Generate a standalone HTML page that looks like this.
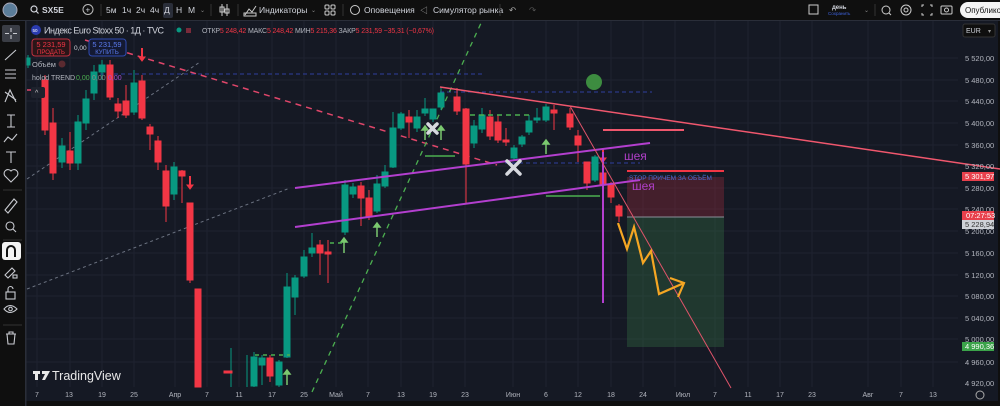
<!DOCTYPE html>
<html><head><meta charset="utf-8">
<style>
html,body{margin:0;padding:0;background:#0f0f0f;width:1000px;height:406px;overflow:hidden}
svg{display:block;font-family:"Liberation Sans","Noto Sans CJK SC",sans-serif}
</style></head><body>
<svg width="1000" height="406" viewBox="0 0 1000 406" xmlns="http://www.w3.org/2000/svg">
<rect x="0" y="0" width="1000" height="406" fill="#0f0f0f"/>
<rect x="26" y="21" width="972" height="380" fill="#151924"/>
<g stroke="#1e2230" stroke-width="1">
<line x1="26" y1="58" x2="958" y2="58"/><line x1="26" y1="80" x2="958" y2="80"/><line x1="26" y1="101" x2="958" y2="101"/><line x1="26" y1="123" x2="958" y2="123"/><line x1="26" y1="145" x2="958" y2="145"/><line x1="26" y1="166" x2="958" y2="166"/><line x1="26" y1="188" x2="958" y2="188"/><line x1="26" y1="209" x2="958" y2="209"/><line x1="26" y1="231" x2="958" y2="231"/><line x1="26" y1="253" x2="958" y2="253"/><line x1="26" y1="275" x2="958" y2="275"/><line x1="26" y1="296" x2="958" y2="296"/><line x1="26" y1="318" x2="958" y2="318"/><line x1="26" y1="339" x2="958" y2="339"/><line x1="26" y1="362" x2="958" y2="362"/>
<line x1="37" y1="21" x2="37" y2="387"/><line x1="70" y1="21" x2="70" y2="387"/><line x1="102" y1="21" x2="102" y2="387"/><line x1="134" y1="21" x2="134" y2="387"/><line x1="175" y1="21" x2="175" y2="387"/><line x1="207" y1="21" x2="207" y2="387"/><line x1="239" y1="21" x2="239" y2="387"/><line x1="272" y1="21" x2="272" y2="387"/><line x1="304" y1="21" x2="304" y2="387"/><line x1="336" y1="21" x2="336" y2="387"/><line x1="368" y1="21" x2="368" y2="387"/><line x1="401" y1="21" x2="401" y2="387"/><line x1="433" y1="21" x2="433" y2="387"/><line x1="465" y1="21" x2="465" y2="387"/><line x1="513" y1="21" x2="513" y2="387"/><line x1="546" y1="21" x2="546" y2="387"/><line x1="578" y1="21" x2="578" y2="387"/><line x1="611" y1="21" x2="611" y2="387"/><line x1="643" y1="21" x2="643" y2="387"/><line x1="675" y1="21" x2="675" y2="387"/><line x1="715" y1="21" x2="715" y2="387"/><line x1="748" y1="21" x2="748" y2="387"/><line x1="780" y1="21" x2="780" y2="387"/><line x1="812" y1="21" x2="812" y2="387"/><line x1="868" y1="21" x2="868" y2="387"/><line x1="901" y1="21" x2="901" y2="387"/><line x1="933" y1="21" x2="933" y2="387"/>
</g>
<rect x="627" y="177" width="97" height="40" fill="#c03040" fill-opacity="0.28"/>
<rect x="627" y="217" width="97" height="130" fill="#3e8a4a" fill-opacity="0.28"/>
<line x1="627" y1="217" x2="724" y2="217" stroke="#8a8f99" stroke-width="1"/>
<line x1="27" y1="289" x2="290" y2="188" stroke="#6b7280" stroke-width="1" stroke-dasharray="3,3"/>
<line x1="27" y1="179" x2="200" y2="62" stroke="#6b7280" stroke-width="1" stroke-dasharray="3,3"/>
<line x1="100" y1="74" x2="482" y2="74" stroke="#2f3f9e" stroke-width="1" stroke-dasharray="4,3"/>
<line x1="440" y1="92" x2="652" y2="92" stroke="#2f3f9e" stroke-width="1" stroke-dasharray="4,3"/>
<line x1="505" y1="163" x2="640" y2="163" stroke="#2f3f9e" stroke-width="1" stroke-dasharray="4,3"/>
<line x1="85" y1="40" x2="497" y2="165" stroke="#e0466a" stroke-width="1.5" stroke-dasharray="6,5"/>
<line x1="27" y1="90" x2="45" y2="90" stroke="#e0466a" stroke-width="1.5" stroke-dasharray="4,3"/>
<line x1="312" y1="392" x2="487" y2="10" stroke="#4caf50" stroke-width="1.3" stroke-dasharray="5,5"/>
<g stroke-width="1">
<g fill="#089981" stroke="#089981">
<line x1="28" y1="55" x2="28" y2="68"/><rect x="26" y="58" width="4" height="7"/>
<line x1="62" y1="138" x2="62" y2="168"/><rect x="59" y="146" width="6" height="16"/>
<line x1="78" y1="115" x2="78" y2="170"/><rect x="75" y="122" width="6" height="41"/>
<line x1="86" y1="90" x2="86" y2="130"/><rect x="83" y="99" width="6" height="24"/>
<line x1="94" y1="65" x2="94" y2="100"/><rect x="91" y="72" width="6" height="21"/>
<line x1="102" y1="60" x2="102" y2="80"/><rect x="99" y="65" width="6" height="7"/>
<line x1="134" y1="70" x2="134" y2="115"/><rect x="131" y="83" width="6" height="29"/>
<line x1="174" y1="162" x2="174" y2="200"/><rect x="171" y="167" width="6" height="27"/>
<line x1="231" y1="348" x2="231" y2="387"/>
<line x1="247" y1="355" x2="247" y2="387"/>
<line x1="254" y1="352" x2="254" y2="387"/><rect x="251" y="357" width="6" height="29"/>
<line x1="262" y1="355" x2="262" y2="385"/><rect x="259" y="358" width="6" height="7"/>
<line x1="279" y1="360" x2="279" y2="387"/><rect x="276" y="362" width="6" height="23"/>
<line x1="287" y1="273" x2="287" y2="358"/><rect x="284" y="287" width="6" height="70"/>
<line x1="295" y1="275" x2="295" y2="315"/><rect x="292" y="278" width="6" height="19"/>
<line x1="304" y1="250" x2="304" y2="278"/><rect x="301" y="257" width="6" height="19"/>
<line x1="312" y1="233" x2="312" y2="257"/><rect x="309" y="248" width="6" height="5"/>
<line x1="345" y1="180" x2="345" y2="235"/><rect x="342" y="185" width="6" height="47"/>
<line x1="353" y1="183" x2="353" y2="198"/><rect x="350" y="187" width="6" height="7"/>
<line x1="377" y1="175" x2="377" y2="213"/><rect x="374" y="184" width="6" height="27"/>
<line x1="385" y1="165" x2="385" y2="188"/><rect x="382" y="172" width="6" height="14"/>
<line x1="393" y1="112" x2="393" y2="168"/><rect x="390" y="128" width="6" height="39"/>
<line x1="401" y1="112" x2="401" y2="130"/><rect x="398" y="114" width="6" height="14"/>
<line x1="417" y1="110" x2="417" y2="132"/><rect x="414" y="117" width="6" height="11"/>
<line x1="425" y1="98" x2="425" y2="116"/><rect x="422" y="109" width="6" height="4"/>
<line x1="433" y1="110" x2="433" y2="122"/><rect x="430" y="109" width="6" height="10"/>
<line x1="441" y1="88" x2="441" y2="110"/><rect x="438" y="93" width="6" height="14"/>
<line x1="474" y1="120" x2="474" y2="148"/><rect x="471" y="126" width="6" height="17"/>
<line x1="482" y1="108" x2="482" y2="133"/><rect x="479" y="115" width="6" height="14"/>
<line x1="514" y1="145" x2="514" y2="160"/><rect x="511" y="148" width="6" height="10"/>
<line x1="522" y1="135" x2="522" y2="147"/><rect x="519" y="137" width="6" height="7"/>
<line x1="529" y1="115" x2="529" y2="135"/><rect x="526" y="121" width="6" height="11"/>
<line x1="537" y1="108" x2="537" y2="123"/><rect x="534" y="118" width="6" height="2"/>
<line x1="546" y1="104" x2="546" y2="122"/><rect x="543" y="107" width="6" height="13"/>
<line x1="595" y1="155" x2="595" y2="182"/><rect x="592" y="157" width="6" height="23"/>
</g>
<g fill="#f23645" stroke="#f23645">
<line x1="45" y1="75" x2="45" y2="135"/><rect x="42" y="80" width="6" height="50"/>
<line x1="53" y1="108" x2="53" y2="180"/><rect x="50" y="123" width="6" height="50"/>
<line x1="70" y1="132" x2="70" y2="170"/><rect x="67" y="151" width="6" height="12"/>
<line x1="110" y1="60" x2="110" y2="100"/><rect x="107" y="65" width="6" height="32"/>
<line x1="118" y1="98" x2="118" y2="118"/><rect x="115" y="104" width="6" height="7"/>
<line x1="126" y1="85" x2="126" y2="118"/><rect x="123" y="101" width="6" height="14"/>
<line x1="142" y1="75" x2="142" y2="120"/><rect x="139" y="81" width="6" height="37"/>
<line x1="142" y1="48" x2="142" y2="58" stroke-width="2"/><polygon points="139,57 145,57 142,61"/>
<line x1="150" y1="124" x2="150" y2="150"/><rect x="147" y="127" width="6" height="7"/>
<line x1="158" y1="136" x2="158" y2="170"/><rect x="155" y="141" width="6" height="21"/>
<line x1="166" y1="165" x2="166" y2="222"/><rect x="163" y="171" width="6" height="35"/>
<line x1="182" y1="170" x2="182" y2="203"/><rect x="179" y="171" width="6" height="5"/>
<line x1="190" y1="176" x2="190" y2="186" stroke-width="2"/><polygon points="187,185 193,185 190,189"/>
<line x1="190" y1="203" x2="190" y2="283"/><rect x="187" y="203" width="6" height="77"/>
<rect x="195" y="289" width="6" height="98"/>
<rect x="224" y="371" width="8" height="2"/>
<line x1="270" y1="355" x2="270" y2="382"/><rect x="267" y="358" width="6" height="18"/>
<line x1="320" y1="240" x2="320" y2="275"/><rect x="317" y="245" width="6" height="8"/>
<line x1="328" y1="240" x2="328" y2="283"/><rect x="325" y="252" width="6" height="2"/>
<line x1="361" y1="182" x2="361" y2="226"/><rect x="358" y="186" width="6" height="12"/>
<line x1="369" y1="190" x2="369" y2="220"/><rect x="366" y="198" width="6" height="19"/>
<line x1="409" y1="110" x2="409" y2="138"/><rect x="406" y="117" width="6" height="5"/>
<line x1="457" y1="88" x2="457" y2="115"/><rect x="454" y="97" width="6" height="14"/>
<line x1="466" y1="108" x2="466" y2="203"/><rect x="463" y="109" width="6" height="55"/>
<line x1="490" y1="110" x2="490" y2="140"/><rect x="487" y="117" width="6" height="19"/>
<line x1="498" y1="115" x2="498" y2="143"/><rect x="495" y="122" width="6" height="18"/>
<line x1="506" y1="128" x2="506" y2="146"/><rect x="503" y="140" width="6" height="2"/>
<line x1="554" y1="105" x2="554" y2="130"/><rect x="551" y="110" width="6" height="3"/>
<line x1="570" y1="108" x2="570" y2="130"/><rect x="567" y="114" width="6" height="13"/>
<line x1="578" y1="130" x2="578" y2="162"/><rect x="575" y="136" width="6" height="9"/>
<line x1="587" y1="162" x2="587" y2="190"/><rect x="584" y="162" width="6" height="21"/>
<line x1="603" y1="148" x2="603" y2="160" stroke-width="2"/><polygon points="600,158 606,158 603,162"/>
<line x1="603" y1="170" x2="603" y2="190"/><rect x="600" y="173" width="6" height="11"/>
<line x1="611" y1="182" x2="611" y2="203"/><rect x="608" y="184" width="6" height="13"/>
<line x1="619" y1="204" x2="619" y2="222"/><rect x="616" y="206" width="6" height="10"/>
</g>
<g stroke="#7bc96f" stroke-width="1.5" fill="#7bc96f">
<line x1="287" y1="372" x2="287" y2="385"/><polygon points="284,374 290,374 287,370"/>
<line x1="344" y1="240" x2="344" y2="253"/><polygon points="341,242 347,242 344,238"/>
<line x1="377" y1="225" x2="377" y2="237"/><polygon points="374,227 380,227 377,223"/>
<line x1="425" y1="128" x2="425" y2="140"/><polygon points="422,130 428,130 425,126"/>
<line x1="441" y1="128" x2="441" y2="140"/><polygon points="438,130 444,130 441,126"/>
<line x1="546" y1="142" x2="546" y2="154"/><polygon points="543,144 549,144 546,140"/>
</g>
<g stroke="#4caf50" stroke-width="1.5">
<line x1="425" y1="156" x2="455" y2="156"/>
<line x1="546" y1="196" x2="600" y2="196"/>
<line x1="470" y1="115" x2="530" y2="115" stroke-dasharray="5,4"/>
<line x1="255" y1="355" x2="290" y2="355" stroke-dasharray="4,4"/>
<line x1="330" y1="243" x2="345" y2="243" stroke-dasharray="4,4"/>
</g>
</g>
<line x1="295" y1="188" x2="650" y2="143" stroke="#b33fcf" stroke-width="2"/>
<line x1="295" y1="227" x2="640" y2="180" stroke="#b33fcf" stroke-width="2"/>
<line x1="603" y1="152" x2="603" y2="303" stroke="#b33fcf" stroke-width="2"/>
<line x1="440" y1="87" x2="1000" y2="169" stroke="#f0576d" stroke-width="1.5"/>
<line x1="570" y1="106" x2="731" y2="388" stroke="#e0546a" stroke-width="1"/>
<line x1="603" y1="130" x2="684" y2="130" stroke="#f0576d" stroke-width="2"/>
<line x1="627" y1="171" x2="724" y2="171" stroke="#f23645" stroke-width="2"/>
<circle cx="594" cy="82" r="8" fill="#3d8c40"/>
<g stroke="#d6d8de" stroke-width="3.5" stroke-linecap="round">
<line x1="428" y1="124" x2="437" y2="133"/><line x1="437" y1="124" x2="428" y2="133"/>
<line x1="507" y1="161" x2="520" y2="174"/><line x1="520" y1="161" x2="507" y2="174"/>
</g>
<polyline points="618,223 627,249 634,227 643,263 651,251 659,294 684,283" fill="none" stroke="#f5a623" stroke-width="2.2"/>
<polyline points="670,278 684,283 678,297" fill="none" stroke="#f5a623" stroke-width="2.2"/>
<text x="624" y="160" fill="#b03fc8" font-size="12">шея</text>
<text x="632" y="190" fill="#b03fc8" font-size="12">шея</text>
<text x="629" y="180" fill="#4b6cd6" font-size="6.5">STOP ПРИЧЕМ ЗА ОБЪЁМ</text>
<g fill="#b2b5be" font-size="7.5">
<text x="965" y="61">5 520,00</text><text x="965" y="83">5 480,00</text><text x="965" y="104">5 440,00</text><text x="965" y="126">5 400,00</text><text x="965" y="148">5 360,00</text><text x="965" y="169">5 320,00</text><text x="965" y="191">5 280,00</text><text x="965" y="212">5 240,00</text><text x="965" y="234">5 200,00</text><text x="965" y="256">5 160,00</text><text x="965" y="278">5 120,00</text><text x="965" y="299">5 080,00</text><text x="965" y="321">5 040,00</text><text x="965" y="342">5 000,00</text><text x="965" y="365">4 960,00</text><text x="965" y="386">4 920,00</text>
</g>
<rect x="962" y="172" width="32" height="9" fill="#e8404c"/><text x="965" y="179" fill="#fff" font-size="7.5">5 301,97</text>
<rect x="962" y="211" width="32" height="9" fill="#e8404c"/><text x="966" y="218" fill="#fff" font-size="7.5">07:27:53</text>
<rect x="962" y="220" width="32" height="9" fill="#cfd2d8"/><text x="965" y="227" fill="#333" font-size="7.5">5 228,94</text>
<rect x="962" y="342" width="32" height="9" fill="#3ba34a"/><text x="965" y="349" fill="#fff" font-size="7.5">4 990,36</text>
<rect x="963" y="24" width="32" height="13" rx="2" fill="#0f0f0f" stroke="#333"/><text x="966" y="33" fill="#d1d4dc" font-size="7">EUR</text><text x="988" y="33" fill="#999" font-size="6">▾</text>
<circle cx="980" cy="395" r="4" fill="none" stroke="#aaa" stroke-width="1"/>
<rect x="26" y="401" width="972" height="5" fill="#0f0f0f"/>
<g fill="#b2b5be" font-size="7" text-anchor="middle">
<text x="37" y="397">7</text><text x="69" y="397">13</text><text x="102" y="397">19</text><text x="134" y="397">25</text><text x="175" y="397">Апр</text><text x="207" y="397">7</text><text x="239" y="397">11</text><text x="272" y="397">17</text><text x="304" y="397">25</text><text x="336" y="397">Май</text><text x="368" y="397">7</text><text x="401" y="397">13</text><text x="433" y="397">19</text><text x="465" y="397">23</text><text x="513" y="397">Июн</text><text x="546" y="397">6</text><text x="578" y="397">12</text><text x="611" y="397">18</text><text x="643" y="397">24</text><text x="683" y="397">Июл</text><text x="715" y="397">7</text><text x="748" y="397">11</text><text x="780" y="397">17</text><text x="812" y="397">23</text><text x="868" y="397">Авг</text><text x="901" y="397">7</text><text x="933" y="397">13</text>
</g>
<g fill="#e8e8e8"><rect x="33" y="371" width="7" height="3"/><rect x="35" y="371" width="3" height="9"/><polygon points="42,371 50,371 45,380 42,380 45,374 42,374"/></g>
<text x="52" y="380" fill="#e8e8e8" font-size="12.5">TradingView</text>
<circle cx="36" cy="30" r="5" fill="#2a3bb0"/><text x="32.5" y="32" fill="#fff" font-size="4.5">50</text>
<text x="44" y="33.5" fill="#d1d4dc" font-size="9" textLength="120">Индекс Euro Stoxx 50 · 1Д · TVC</text>
<circle cx="179" cy="30" r="2.5" fill="#089981"/><rect x="186" y="28" width="5" height="5" fill="#7a2a3a"/>
<text x="202" y="33" fill="#b2b5be" font-size="7" textLength="232">ОТКР<tspan fill="#f23645">5 248,42</tspan> МАКС<tspan fill="#f23645">5 248,42</tspan> МИН<tspan fill="#f23645">5 215,36</tspan> ЗАКР<tspan fill="#f23645">5 231,59</tspan> <tspan fill="#f23645">−35,31 (−0,67%)</tspan></text>
<rect x="32" y="39" width="38" height="17" rx="3" fill="#2a1518" stroke="#c0313f"/>
<text x="51" y="47" fill="#f23645" font-size="7.5" text-anchor="middle">5 231,59</text><text x="51" y="54" fill="#f23645" font-size="6" text-anchor="middle">ПРОДАТЬ</text>
<text x="74" y="50" fill="#d1d4dc" font-size="6.5">0,00</text>
<rect x="89" y="39" width="37" height="17" rx="3" fill="#141a33" stroke="#2f4bb0"/>
<text x="107" y="47" fill="#5b7bf0" font-size="7.5" text-anchor="middle">5 231,59</text><text x="107" y="54" fill="#5b7bf0" font-size="6" text-anchor="middle">КУПИТЬ</text>
<text x="32" y="67" fill="#b2b5be" font-size="7.5">Объём</text><circle cx="62" cy="64" r="3.5" fill="#5a2a30"/>
<text x="32" y="80" fill="#b2b5be" font-size="7">holod TREND</text>
<text x="76" y="80" fill="#4caf50" font-size="7">0,00</text><text x="92" y="80" fill="#888" font-size="7">0,00</text><text x="108" y="80" fill="#a24fd0" font-size="7">0,00</text>
<rect x="31" y="87" width="14" height="11" rx="2" fill="#1e222d"/><text x="35" y="95" fill="#ccc" font-size="7">^</text>
<rect x="0" y="0" width="1000" height="20" fill="#0f0f0f"/>
<rect x="0" y="20" width="1000" height="1" fill="#2a2e39"/>
<circle cx="10" cy="10" r="7" fill="#5b7d9a"/><circle cx="10" cy="10" r="7" fill="none" stroke="#aab" stroke-width="1"/>
<g fill="#d1d4dc" font-size="8.5">
<circle cx="34" cy="9" r="3" fill="none" stroke="#d1d4dc" stroke-width="1.2"/><line x1="36" y1="11" x2="38.5" y2="13.5" stroke="#d1d4dc" stroke-width="1.2"/>
<text x="42" y="13" font-weight="bold">SX5E</text>
<circle cx="88" cy="9.5" r="5" fill="none" stroke="#bbb" stroke-width="1"/><text x="85.5" y="12.5" font-size="8">+</text>
<line x1="101" y1="4" x2="101" y2="16" stroke="#333"/>
<text x="106" y="13">5м</text><text x="122" y="13">1ч</text><text x="136" y="13">2ч</text><text x="150" y="13">4ч</text>
<rect x="163" y="3" width="10" height="15" rx="2" fill="#2a2e39"/><text x="164" y="13">Д</text>
<text x="176" y="13">Н</text><text x="188" y="13">М</text><text x="200" y="12" font-size="6" fill="#888">⌄</text>
<line x1="211" y1="4" x2="211" y2="16" stroke="#333"/>
<g stroke="#ccc" stroke-width="1" fill="none"><line x1="222" y1="4" x2="222" y2="16"/><rect x="220" y="7" width="4" height="5"/><line x1="227" y1="4" x2="227" y2="16"/><rect x="225" y="9" width="4" height="4"/></g>
<line x1="238" y1="4" x2="238" y2="16" stroke="#333"/>
<path d="M245 15 L249 9 L252 12 L256 6" stroke="#ccc" fill="none"/><rect x="244" y="13" width="12" height="3" fill="none" stroke="#ccc"/>
<text x="259" y="13">Индикаторы</text><text x="311" y="12" font-size="6" fill="#888">⌄</text>
<g fill="none" stroke="#ccc"><rect x="325" y="5" width="4" height="4" rx="1"/><rect x="331" y="5" width="4" height="4" rx="1"/><rect x="325" y="11" width="4" height="4" rx="1"/><rect x="331" y="11" width="4" height="4" rx="1"/></g>
<line x1="343" y1="4" x2="343" y2="16" stroke="#333"/>
<circle cx="355" cy="10" r="4.5" fill="none" stroke="#ccc"/>
<text x="364" y="13">Оповещения</text>
<text x="420" y="13" fill="#aaa" font-size="8">◁</text><text x="433" y="13">Симулятор рынка</text>
<line x1="500" y1="4" x2="500" y2="16" stroke="#333"/>
<text x="509" y="13" fill="#aaa">↶</text><text x="529" y="13" fill="#555">↷</text>
<rect x="809" y="5" width="9" height="9" fill="none" stroke="#ccc"/>
<text x="832" y="9" font-size="6" font-weight="bold">день</text><text x="828" y="15" font-size="4.5" fill="#3e63e0">Сохранить</text>
<text x="864" y="12" font-size="6" fill="#888">⌄</text>
<line x1="875" y1="4" x2="875" y2="16" stroke="#333"/>
<circle cx="886" cy="10" r="4" fill="none" stroke="#ccc"/><line x1="889" y1="13" x2="891" y2="15" stroke="#ccc"/>
<circle cx="906" cy="10" r="5" fill="none" stroke="#ccc"/><circle cx="906" cy="10" r="2" fill="none" stroke="#ccc"/>
<path d="M922 7 V5 H924 M930 5 H932 V7 M932 13 V15 H930 M924 15 H922 V13" stroke="#ccc" fill="none"/>
<rect x="941" y="6" width="11" height="8" rx="1" fill="none" stroke="#ccc"/><circle cx="946.5" cy="10" r="2" fill="none" stroke="#ccc"/>
<rect x="960" y="2" width="50" height="16" rx="8" fill="#f5f5f5"/><text x="965" y="13" fill="#111" font-size="8">Опублико</text>
</g>
<rect x="0" y="21" width="25" height="385" fill="#0f0f0f"/>
<rect x="25" y="21" width="1.5" height="385" fill="#2a2e39"/>
<rect x="2" y="25" width="18" height="17" rx="2" fill="#3a3d45"/>
<g stroke="#c8cad0" stroke-width="1.1" fill="none">
<path d="M11 28 V32 M11 35 V39 M5 33.5 H9 M13 33.5 H17"/>
<line x1="5" y1="60" x2="16" y2="50"/>
<path d="M5 70 H16 M5 74 H16 M5 78 H16"/>
<path d="M5 102 L10 90 L16 102 M5 92 L16 100"/>
<path d="M7 115 H15 M11 115 V127 M7 127 H15"/>
<path d="M4 142 L8 137 L12 140 L17 134"/>
<path d="M6 152 H16 M11 152 V163"/>
<path d="M11 182 L5 176 A3 3 0 0 1 11 171 A3 3 0 0 1 17 176 Z"/>
<line x1="3" y1="190" x2="22" y2="190" stroke="#333"/>
<path d="M5 210 L14 199 L17 202 L8 213 Z"/>
<circle cx="10" cy="226" r="4"/><line x1="13" y1="229" x2="16" y2="232"/>
<line x1="3" y1="240" x2="22" y2="240" stroke="#333"/>
</g>
<rect x="2" y="242" width="19" height="18" rx="3" fill="#f2f2f2"/>
<path d="M7 257 V250 A4 4 0 0 1 15 250 V257" stroke="#111" stroke-width="2" fill="none"/>
<g stroke="#c8cad0" stroke-width="1.1" fill="none">
<path d="M5 275 L12 268 L15 271 L8 278 Z"/><rect x="13" y="275" width="4" height="3"/>
<rect x="6" y="292" width="9" height="7"/><path d="M8 292 V289 A2.5 2.5 0 0 1 13 289"/>
<path d="M4 309 Q10 302 17 309 Q10 316 4 309 Z"/><circle cx="10.5" cy="309" r="1.8"/>
<line x1="3" y1="325" x2="22" y2="325" stroke="#333"/>
<path d="M6 334 H16 M9 334 V332 H13 V334 M7 334 L8 344 H14 L15 334"/>
</g>
</svg>
</body></html>
